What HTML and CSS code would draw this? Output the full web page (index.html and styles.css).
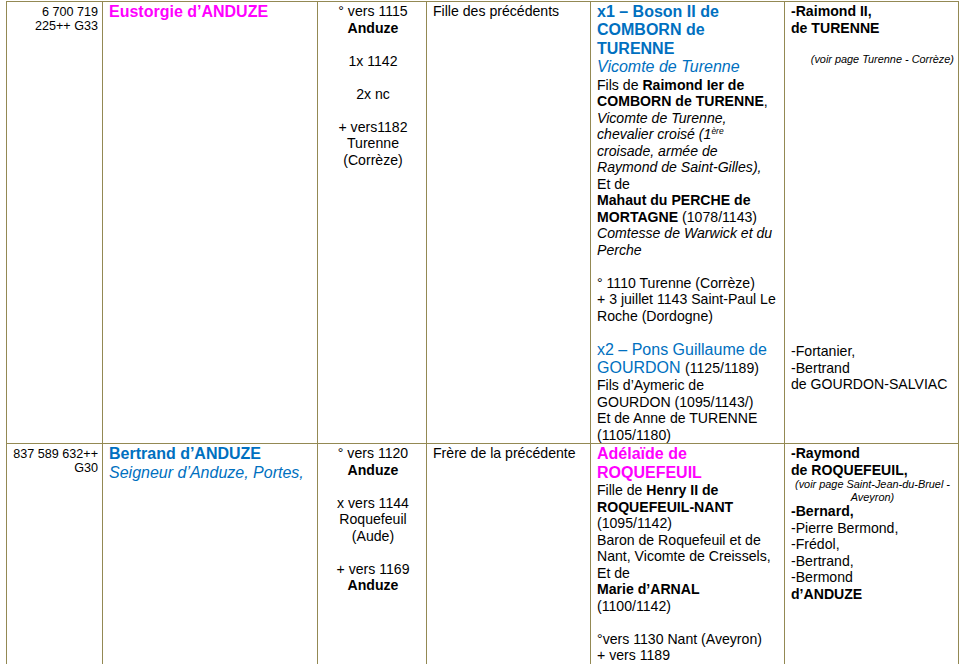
FILE: index.html
```html
<!DOCTYPE html>
<html lang="fr">
<head>
<meta charset="utf-8">
<title>Généalogie – ANDUZE</title>
<link rel="stylesheet" href="styles.css">
</head>
<body>
<div class="sheet">
<table class="genealogy">
  <colgroup>
    <col class="c-num"><col class="c-name"><col class="c-dates"><col class="c-rel"><col class="c-spouse"><col class="c-kids">
  </colgroup>
  <tbody>
    <tr>
      <td class="num" rowspan="2">6 700 719<br>225++ G33</td>
      <td class="name" rowspan="2"><p class="hd magenta">Eustorgie d’ANDUZE</p></td>
      <td class="dates" rowspan="2">
        <p>° vers 1115<br><b>Anduze</b></p>
        <p class="gap">1x 1142</p>
        <p class="gap">2x nc</p>
        <p class="gap">+ vers1182<br>Turenne<br>(Corrèze)</p>
      </td>
      <td class="rel" rowspan="2">Fille des précédents</td>
      <td class="spouse">
        <p class="hd blue">x1 – Boson II de<br>COMBORN de<br>TURENNE</p>
        <p class="hd-it blue">Vicomte de Turenne</p>
        <p>Fils de <b>Raimond Ier de<br>COMBORN de TURENNE</b>,<br><i>Vicomte de Turenne,<br>chevalier croisé (1<sup>ère</sup><br>croisade, armée de<br>Raymond de Saint-Gilles),</i><br>Et de<br><b>Mahaut du PERCHE de<br>MORTAGNE</b> (1078/1143)<br><i>Comtesse de Warwick et du<br>Perche</i></p>
        <p class="gap">° 1110 Turenne (Corrèze)<br>+ 3 juillet 1143 Saint-Paul Le<br>Roche (Dordogne)</p>
      </td>
      <td class="kids">
        <p><b>-Raimond II,<br>de TURENNE</b></p>
        <p class="note right">(voir page Turenne - Corrèze)</p>
      </td>
    </tr>
    <tr>
      <td class="spouse cont">
        <p class="hd-reg blue">x2 – Pons Guillaume de<br>GOURDON <span class="small">(1125/1189)</span></p>
        <p>Fils d’Aymeric de<br>GOURDON (1095/1143/)<br>Et de Anne de TURENNE<br>(1105/1180)</p>
      </td>
      <td class="kids cont">
        <p>-Fortanier,<br>-Bertrand<br>de GOURDON-SALVIAC</p>
      </td>
    </tr>
    <tr>
      <td class="num">837 589 632++<br>G30</td>
      <td class="name">
        <p class="hd blue">Bertrand d’ANDUZE</p>
        <p class="hd-it blue">Seigneur d’Anduze, Portes,</p>
      </td>
      <td class="dates">
        <p>° vers 1120<br><b>Anduze</b></p>
        <p class="gap">x vers 1144<br>Roquefeuil<br>(Aude)</p>
        <p class="gap">+ vers 1169<br><b>Anduze</b></p>
      </td>
      <td class="rel">Frère de la précédente</td>
      <td class="spouse last">
        <p class="hd magenta">Adélaïde de<br>ROQUEFEUIL</p>
        <p>Fille de <b>Henry II de<br>ROQUEFEUIL-NANT</b><br>(1095/1142)<br>Baron de Roquefeuil et de<br>Nant, Vicomte de Creissels,<br>Et de<br><b>Marie d’ARNAL</b><br>(1100/1142)</p>
        <p class="gap">°vers 1130 Nant (Aveyron)<br>+ vers 1189<br><b>Anduze</b></p>
      </td>
      <td class="kids">
        <p><b>-Raymond<br>de ROQUEFEUIL,</b></p>
        <p class="note center">(voir page Saint-Jean-du-Bruel -<br>Aveyron)</p>
        <p><b>-Bernard,</b><br>-Pierre Bermond,<br>-Frédol,<br>-Bertrand,<br>-Bermond<br><b>d’ANDUZE</b></p>
      </td>
    </tr>
  </tbody>
</table>
</div>
</body>
</html>
```

FILE: styles.css
```css
html, body {
  margin: 0;
  padding: 0;
  background: #ffffff;
}

body {
  font-family: "Liberation Sans", Arial, sans-serif;
  font-size: 14.1px;
  color: #000000;
  overflow: hidden;
}

.sheet {
  padding: 1px 0 0 6px;
}

.genealogy {
  border-collapse: collapse;
  table-layout: fixed;
  width: 953px;
}

.c-num { width: 96px; }
.c-name { width: 215px; }
.c-dates { width: 109px; }
.c-rel { width: 164px; }
.c-spouse { width: 194px; }
.c-kids { width: 174px; }

.genealogy td {
  border: 1px solid #938953;
  vertical-align: top;
  padding: 1px 2px 0 6px;
  line-height: 16.5px;
}

.genealogy p {
  margin: 0;
}

.genealogy .gap {
  margin-top: 16.5px;
}

.genealogy td.num {
  font-size: 12.6px;
  line-height: 14px;
  text-align: right;
  padding-top: 3px;
  padding-right: 4px;
}

.genealogy td.dates {
  text-align: center;
  padding-right: 4px;
}

.genealogy td.kids {
  padding-right: 4px;
}

.hd {
  font-size: 16px;
  line-height: 18.4px;
  font-weight: bold;
}

.hd-it {
  font-size: 16px;
  line-height: 18.4px;
  font-style: italic;
}

.hd-reg {
  font-size: 16px;
  line-height: 18.4px;
}

.small {
  font-size: 14.1px;
  line-height: 1;
  color: #000000;
}

.blue { color: #0070c0; }
.magenta { color: #ff00ff; }

sup {
  font-size: 8.5px;
  line-height: 0;
  vertical-align: 5px;
}

.genealogy td.cont {
  border-top: hidden;
  padding-top: 16.5px;
}

.genealogy td.kids.cont {
  padding-top: 19px;
}

.genealogy td.last {
  padding-bottom: 40px;
}

.note {
  font-size: 10.9px;
  line-height: 12.5px;
  font-style: italic;
}

.genealogy .kids .note.right {
  margin-top: 16.5px;
  text-align: right;
}

.note.center {
  text-align: center;
}
```
